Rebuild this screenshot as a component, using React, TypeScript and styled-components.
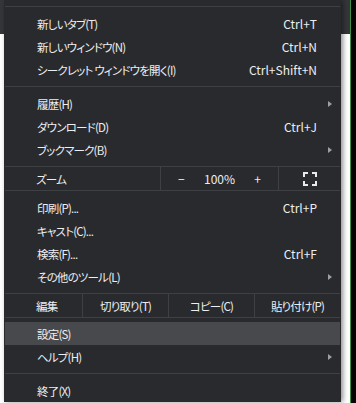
import React from "react";
import styled, { createGlobalStyle } from "styled-components";

const Global = createGlobalStyle`
  html, body { margin: 0; padding: 0; background: #000; }
  body { font-family: "Noto Sans CJK JP", "Noto Sans", sans-serif; }
`;

const Screen = styled.div`
  position: relative;
  width: 356px;
  height: 403px;
  display: flex;
  overflow: hidden;
`;

const Browser = styled.div`
  width: 350px;
  display: flex;
  flex-direction: column;
`;

const Toolbar = styled.div`
  height: 34px;
  background: #35363a;
`;

const Page = styled.div`
  flex: 1;
  background: #ffffff;
`;

const WindowEdge = styled.div`
  width: 1px;
  background: #3f8f46;
`;

const Outside = styled.div`
  flex: 1;
  background: #050505;
`;

const Menu = styled.div`
  position: absolute;
  left: 4px;
  top: 0;
  width: 337px;
  padding: 1px 1px 0;
  box-sizing: border-box;
  background: #292a2d;
  box-shadow: 2px 0 5px rgba(0, 0, 0, 0.45);
  color: #eceef1;
  font-size: 11.5px;
  letter-spacing: -0.8px;
  font-feature-settings: "palt";
  display: flex;
  flex-direction: column;
`;

const Separator = styled.div`
  height: 1px;
  margin: 5px 0;
  background: #3f4043;
`;

const Item = styled.div<{ $active?: boolean }>`
  height: 23px;
  display: flex;
  align-items: center;
  padding: 0 8px 0 32px;
  background: ${(p) => (p.$active ? "#48494c" : "transparent")};
`;

const Label = styled.span`
  flex: 1;
  white-space: nowrap;
`;

const Latin = styled.span`
  font-size: 12px;
  letter-spacing: 0;
  white-space: nowrap;
`;

const Shortcut = styled(Latin)`
  margin-right: 15px;
`;

const Arrow = styled.span`
  width: 0;
  height: 0;
  margin-left: auto;
  border-top: 3.5px solid transparent;
  border-bottom: 3.5px solid transparent;
  border-left: 4px solid #9aa0a6;
`;

const BandRow = styled.div<{ $after: number }>`
  margin: 5px 0 ${(p) => p.$after}px;
  height: 23px;
  border-top: 1px solid #3f4043;
  border-bottom: 1px solid #3f4043;
  display: grid;
  align-items: stretch;
`;

const ZoomRow = styled(BandRow)`
  grid-template-columns: 155px 118px 1fr;
`;

const EditRow = styled(BandRow)`
  grid-template-columns: 77px 86px 86px 1fr;
`;

const Cell = styled.div<{ $divider?: boolean; $center?: boolean }>`
  display: flex;
  align-items: center;
  justify-content: ${(p) => (p.$center ? "center" : "flex-start")};
  padding-left: ${(p) => (p.$center ? 0 : 31)}px;
  border-left: ${(p) => (p.$divider ? "1px solid #3f4043" : "none")};
  white-space: nowrap;
`;

const ZoomControls = styled.div`
  display: flex;
  align-items: center;
  width: 100%;
`;

const ZoomBtn = styled(Latin)<{ $w: number }>`
  width: ${(p) => p.$w}px;
  text-align: center;
`;

const FullIcon = () => (
  <svg width="14" height="14" viewBox="0 0 14 14" fill="none" stroke="#e8eaed" strokeWidth="2">
    <path d="M1 5V1h4M9 1h4v4M13 9v4H9M5 13H1V9" />
  </svg>
);

type Entry =
  | { kind: "item"; label: string; shortcut?: string; sub?: boolean; active?: boolean }
  | { kind: "sep" }
  | { kind: "zoom" }
  | { kind: "edit" };

const entries: Entry[] = [
  { kind: "sep" },
  { kind: "item", label: "新しいタブ(T)", shortcut: "Ctrl+T" },
  { kind: "item", label: "新しいウィンドウ(N)", shortcut: "Ctrl+N" },
  { kind: "item", label: "シークレット ウィンドウを開く(I)", shortcut: "Ctrl+Shift+N" },
  { kind: "sep" },
  { kind: "item", label: "履歴(H)", sub: true },
  { kind: "item", label: "ダウンロード(D)", shortcut: "Ctrl+J" },
  { kind: "item", label: "ブックマーク(B)", sub: true },
  { kind: "zoom" },
  { kind: "item", label: "印刷(P)...", shortcut: "Ctrl+P" },
  { kind: "item", label: "キャスト(C)..." },
  { kind: "item", label: "検索(F)...", shortcut: "Ctrl+F" },
  { kind: "item", label: "その他のツール(L)", sub: true },
  { kind: "edit" },
  { kind: "item", label: "設定(S)", active: true },
  { kind: "item", label: "ヘルプ(H)", sub: true },
  { kind: "sep" },
  { kind: "item", label: "終了(X)" },
];

export default function App() {
  return (
    <>
      <Global />
      <Screen>
        <Browser>
          <Toolbar />
          <Page />
        </Browser>
        <WindowEdge />
        <Outside />
        <Menu>
          {entries.map((e, i) => {
            if (e.kind === "sep") return <Separator key={i} />;
            if (e.kind === "zoom")
              return (
                <ZoomRow key={i} $after={5}>
                  <Cell>ズーム</Cell>
                  <Cell $divider $center>
                    <ZoomControls>
                      <ZoomBtn $w={41}>−</ZoomBtn>
                      <ZoomBtn $w={36}>100%</ZoomBtn>
                      <ZoomBtn $w={41}>+</ZoomBtn>
                    </ZoomControls>
                  </Cell>
                  <Cell $divider $center>
                    <FullIcon />
                  </Cell>
                </ZoomRow>
              );
            if (e.kind === "edit")
              return (
                <EditRow key={i} $after={4}>
                  <Cell>編集</Cell>
                  <Cell $divider $center>切り取り(T)</Cell>
                  <Cell $divider $center>コピー(C)</Cell>
                  <Cell $divider $center>貼り付け(P)</Cell>
                </EditRow>
              );
            return (
              <Item key={i} $active={e.active}>
                <Label>{e.label}</Label>
                {e.shortcut && <Shortcut>{e.shortcut}</Shortcut>}
                {e.sub && <Arrow />}
              </Item>
            );
          })}
        </Menu>
      </Screen>
    </>
  );
}
